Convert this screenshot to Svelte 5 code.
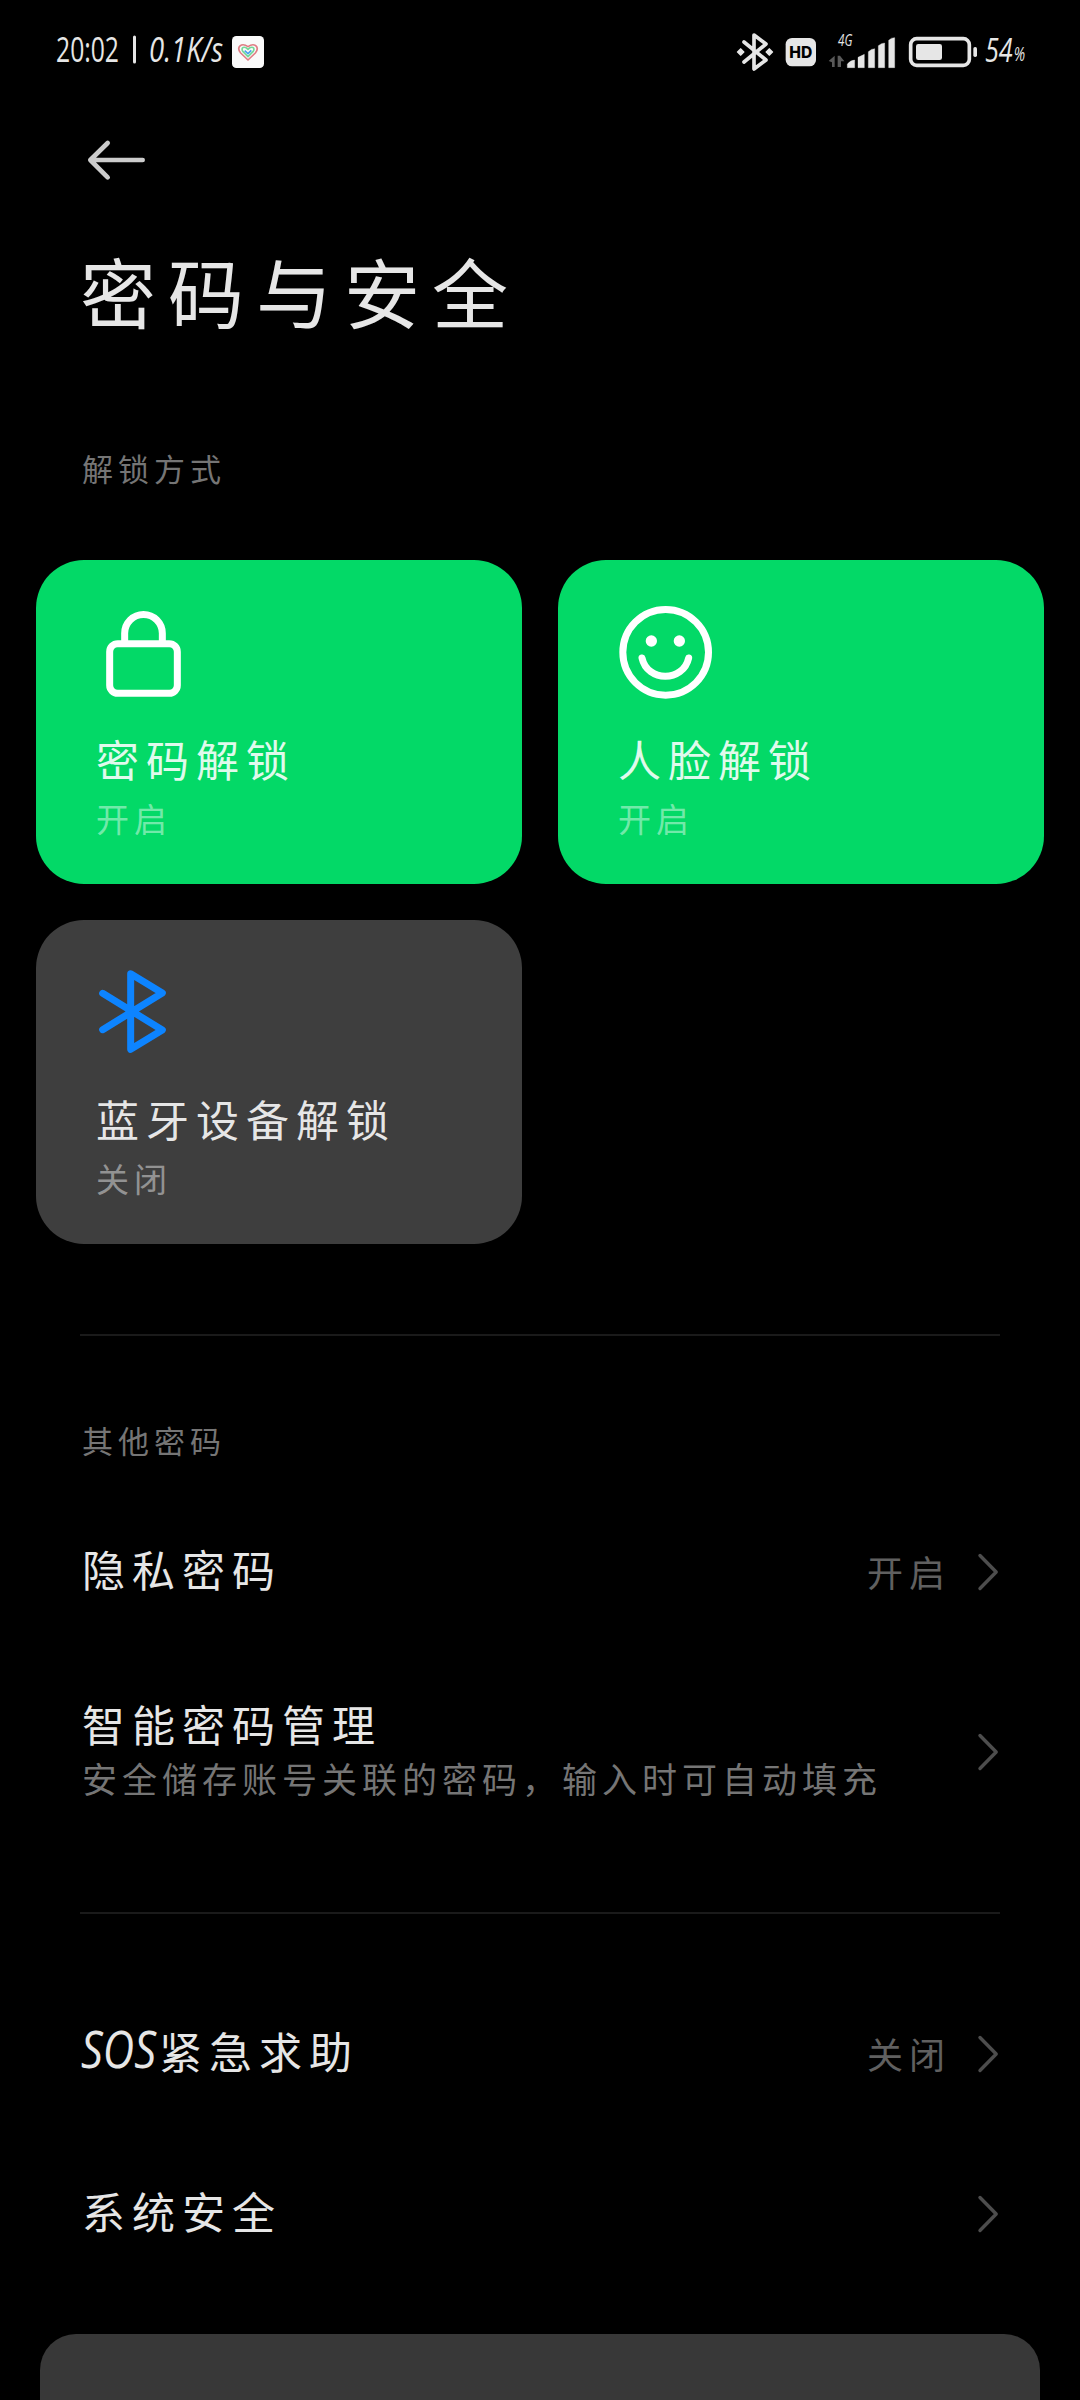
<script>
  const cards = [
    { icon: 'lock', title: '密码解锁', state: '开启', on: true },
    { icon: 'face', title: '人脸解锁', state: '开启', on: true },
    { icon: 'bluetooth', title: '蓝牙设备解锁', state: '关闭', on: false }
  ];
  const passwordRows = [
    { title: '隐私密码', value: '开启' },
    { title: '智能密码管理', desc: '安全储存账号关联的密码，输入时可自动填充' }
  ];
  const safetyRows = [
    { latin: 'SOS', title: '紧急求助', value: '关闭' },
    { title: '系统安全' }
  ];
</script>

{#snippet row(item)}
  <div class="row" class:tall={item.desc}>
    <div class="row-text">
      <div class="row-title">
        {#if item.latin}
          <svg class="latin" width="77" height="60" viewBox="0 0 77 60">
            <text x="-1" y="48" font-size="52" textLength="75" lengthAdjust="spacingAndGlyphs">{item.latin}</text>
          </svg>
        {/if}
        <span>{item.title}</span>
      </div>
      {#if item.desc}<div class="row-desc">{item.desc}</div>{/if}
    </div>
    {#if item.value}<span class="row-value">{item.value}</span>{/if}
    <svg class="chevron" width="22" height="40" viewBox="0 0 22 40">
      <path d="M2 3.500 18.200 20 2 36.500" />
    </svg>
  </div>
{/snippet}

<div class="page">
  <header class="status">
    <svg class="latin" width="176" height="60" viewBox="0 0 176 60">
      <text x="0" y="42" font-size="34" textLength="63" lengthAdjust="spacingAndGlyphs">20:02</text>
      <path d="M78.500 17V42" stroke="#e6e6e6" stroke-width="3" stroke-linecap="round" />
      <text class="slant" x="93" y="42" font-size="34" textLength="74" lengthAdjust="spacingAndGlyphs">0.1K/s</text>
    </svg>
    <svg width="32" height="60" viewBox="576 0 96 180">
      <rect x="576" y="48" width="96" height="96" rx="13" fill="#fafafa" />
      <g fill="none" stroke-width="5" stroke-linejoin="round">
        <path d="M624 120 602 99C588 82 604 66 624 80 644 66 660 82 646 99Z" stroke="#df7d84" />
        <path d="M624 110 609 95C600 82 614 77 624 88 634 77 648 82 639 95Z" stroke="#74d99a" />
        <path d="M614 92 624 101 634 91" stroke="#49a3ee" />
      </g>
    </svg>
    <div class="spacer"></div>
    <svg width="40" height="60" viewBox="48 0 120 180">
      <path d="M72 66 138 120 102 147V45L138 72 72 126" fill="none" stroke="#e6e6e6" stroke-width="11" stroke-linecap="round" stroke-linejoin="round" />
      <path d="M53 96 62 87 71 96 62 105ZM139 96 148 87 157 96 148 105Z" fill="#e6e6e6" stroke="#e6e6e6" stroke-width="5" stroke-linejoin="round" />
    </svg>
    <svg width="40" height="60" viewBox="168 0 120 180">
      <rect x="197" y="54" width="91" height="85" rx="19" fill="#e6e6e6" />
      <text class="hd" x="208" y="113" font-size="46" textLength="69" lengthAdjust="spacingAndGlyphs">HD</text>
    </svg>
    <svg class="latin" width="80" height="60" viewBox="288 0 240 180">
      <text class="slant" x="354" y="77" font-size="49" textLength="43" lengthAdjust="spacingAndGlyphs">4G</text>
      <path d="M326 123 344 107V141H336V127ZM353 107H360L373 124H363V141H353Z" fill="#595959" />
      <path d="M382 143V132Q392 120 404 120V143ZM414 143V112L433 103V143ZM445 143V95Q454 86 464 86V143ZM475 143V77Q484 69 494 69V143ZM506 143V61Q514 52 524 53V143Z" fill="#e6e6e6" stroke="#e6e6e6" stroke-width="1" stroke-linejoin="round" />
    </svg>
    <svg width="86" height="60" viewBox="528 0 258 180">
      <rect x="572" y="56" width="176" height="80" rx="18" fill="none" stroke="#e6e6e6" stroke-width="11" />
      <rect x="588" y="72" width="78" height="48" rx="7" fill="#e6e6e6" />
      <rect x="760" y="81" width="11" height="30" rx="5" fill="#e6e6e6" />
    </svg>
    <svg class="latin" width="46" height="60" viewBox="786 0 138 180">
      <text class="slant" x="795" y="125" font-size="100" textLength="83" lengthAdjust="spacingAndGlyphs">54</text>
      <text class="slant" x="881" y="123" font-size="58" textLength="34" lengthAdjust="spacingAndGlyphs">%</text>
    </svg>
  </header>

  <nav>
    <svg width="70" height="60" viewBox="60 31 210 180">
      <path d="M248 121H91L143 70M91 121 143 173" fill="none" stroke="#ccc" stroke-width="14" stroke-linecap="round" stroke-linejoin="round" />
    </svg>
  </nav>

  <h1>密码与安全</h1>

  <h2 class="first">解锁方式</h2>
  <section class="cards">
    {#each cards as card}
      <div class="card" class:on={card.on}>
        {#if card.icon === 'lock'}
          <svg width="100" height="100" viewBox="198 150 300 300">
            <rect x="239" y="281" width="203" height="149" rx="24" />
            <path d="M284 278V250a56.500 56.500 0 0 1 113 0V278" />
          </svg>
        {:else if card.icon === 'face'}
          <svg width="100" height="100" viewBox="204 150 300 300">
            <circle cx="347" cy="307" r="128.500" />
            <circle class="eye" cx="304" cy="273" r="17" />
            <circle class="eye" cx="388" cy="273" r="17" />
            <path d="M276 324C292 397 400 397 416 324" />
          </svg>
        {:else}
          <svg class="blue" width="100" height="100" viewBox="198 150 300 300">
            <path d="M218 250 397 360 302 418V191L397 249 218 359" />
          </svg>
        {/if}
        <div class="card-title">{card.title}</div>
        <div class="card-state">{card.state}</div>
      </div>
    {/each}
  </section>

  <hr />
  <h2>其他密码</h2>
  {#each passwordRows as item}{@render row(item)}{/each}

  <hr class="second" />
  <div class="group">
    {#each safetyRows as item}{@render row(item)}{/each}
  </div>
  <div class="sheet"></div>
</div>

<style>
  :global(body) {
    background: #000;
  }
  .page {
    width: 1080px;
    height: 2400px;
    overflow: hidden;
    display: flex;
    flex-direction: column;
    background: #000;
    color: #e6e6e6;
    font-family: 'Noto Sans CJK SC', sans-serif;
    font-weight: 400;
  }
  .page > * {
    flex-shrink: 0;
  }
  svg {
    display: block;
    flex-shrink: 0;
    overflow: visible;
    letter-spacing: 0;
  }
  .latin text {
    font-family: 'Open Sans', sans-serif;
    font-weight: 400;
    fill: #e6e6e6;
  }
  text.slant,
  .row-title text {
    font-style: italic;
  }
  .hd {
    font-family: Inter, sans-serif;
    font-weight: 800;
    fill: #000;
  }
  .status {
    display: flex;
    height: 80px;
    padding: 20px 52px 0 56px;
    box-sizing: border-box;
  }
  .spacer {
    flex: 1;
  }
  nav {
    height: 140px;
    padding: 50px 80px 0;
    box-sizing: border-box;
  }
  h1 {
    margin: 0;
    height: 140px;
    padding-left: 80px;
    font-size: 76px;
    line-height: 140px;
    font-weight: 400;
    letter-spacing: 12px;
  }
  h2 {
    margin: 0;
    height: 156px;
    padding-left: 82px;
    box-sizing: border-box;
    padding-top: 79px;
    font-size: 31px;
    line-height: 50px;
    font-weight: 400;
    letter-spacing: 5px;
    color: #757575;
  }
  h2.first {
    height: 200px;
    padding-top: 83px;
  }
  .cards {
    display: grid;
    grid-template-columns: 486px 486px;
    grid-auto-rows: 324px;
    gap: 36px;
    padding: 0 36px;
  }
  .card {
    padding: 40px 60px 0;
    border-radius: 48px;
    background: #3e3e3e;
  }
  .card.on {
    background: #03d967;
  }
  .card svg {
    fill: none;
    stroke: #fff;
    stroke-width: 21;
    stroke-linecap: round;
    stroke-linejoin: round;
  }
  .card svg.blue {
    stroke: #0d84ff;
  }
  .card .eye {
    fill: #fff;
    stroke: none;
  }
  .card-title {
    margin-top: 28px;
    font-size: 43px;
    line-height: 60px;
    letter-spacing: 7px;
    color: rgba(255, 255, 255, 0.88);
  }
  .card-state {
    margin-top: 5px;
    font-size: 33px;
    line-height: 50px;
    letter-spacing: 5px;
    color: rgba(255, 255, 255, 0.45);
  }
  hr {
    width: 920px;
    height: 2px;
    margin: 90px 80px 0;
    border: 0;
    background: #1a1a1a;
  }
  hr.second {
    margin-top: 60px;
  }
  .group {
    padding-top: 60px;
  }
  .row {
    display: flex;
    align-items: center;
    height: 160px;
    padding: 0 80px;
    box-sizing: border-box;
  }
  .row.tall {
    height: 200px;
  }
  .row-text {
    flex: 1;
    padding-left: 2px;
  }
  .row-title {
    display: flex;
    height: 60px;
    margin-top: -9px;
    font-size: 43px;
    line-height: 60px;
    letter-spacing: 7px;
  }
  .row-desc {
    height: 50px;
    font-size: 35px;
    line-height: 50px;
    letter-spacing: 5px;
    color: #757575;
  }
  .row-value {
    margin-top: -3px;
    margin-right: 27px;
    font-size: 36px;
    line-height: 50px;
    letter-spacing: 6px;
    color: #606060;
  }
  .chevron {
    fill: none;
    stroke: #4d4d4d;
    stroke-width: 3.4;
    stroke-linecap: round;
    stroke-linejoin: round;
  }
  .sheet {
    width: 1000px;
    height: 120px;
    margin: 40px 40px 0;
    border-radius: 36px 36px 0 0;
    background: #383838;
  }
</style>
